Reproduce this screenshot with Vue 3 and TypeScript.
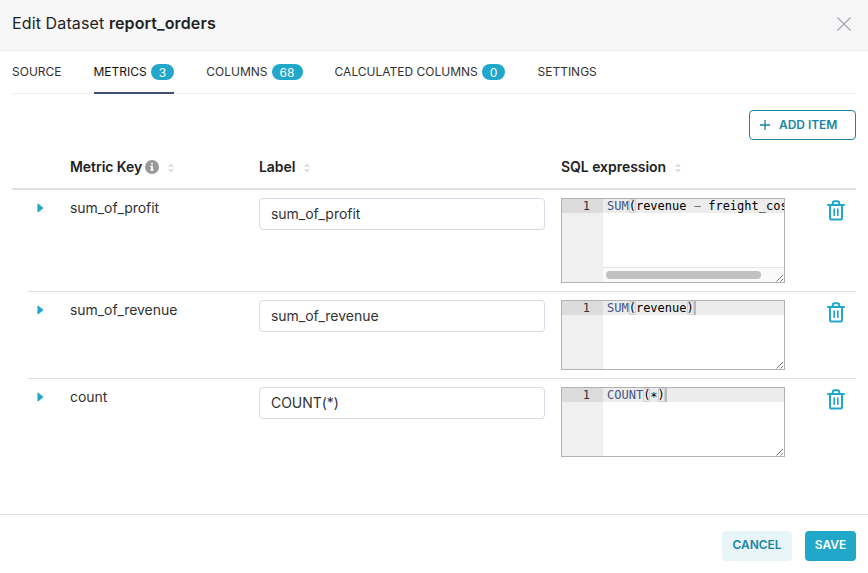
<script setup lang="ts">
import { ref } from 'vue'

interface Tab {
  label: string
  count?: number
}
interface Token {
  text: string
  kind: 'func' | 'plain' | 'op' | 'bracket' | 'star'
}
interface Metric {
  key: string
  label: string
  tokens: Token[]
  cursor: boolean
  scroll: boolean
}

const tabs: Tab[] = [
  { label: 'SOURCE' },
  { label: 'METRICS', count: 3 },
  { label: 'COLUMNS', count: 68 },
  { label: 'CALCULATED COLUMNS', count: 0 },
  { label: 'SETTINGS' },
]
const active = ref('METRICS')

const metrics = ref<Metric[]>([
  {
    key: 'sum_of_profit',
    label: 'sum_of_profit',
    tokens: [
      { text: 'SUM', kind: 'func' },
      { text: '(', kind: 'bracket' },
      { text: 'revenue ', kind: 'plain' },
      { text: '−', kind: 'op' },
      { text: ' freight_cos', kind: 'plain' },
    ],
    cursor: false,
    scroll: true,
  },
  {
    key: 'sum_of_revenue',
    label: 'sum_of_revenue',
    tokens: [
      { text: 'SUM', kind: 'func' },
      { text: '(', kind: 'bracket' },
      { text: 'revenue', kind: 'plain' },
      { text: ')', kind: 'bracket' },
    ],
    cursor: true,
    scroll: false,
  },
  {
    key: 'count',
    label: 'COUNT(*)',
    tokens: [
      { text: 'COUNT', kind: 'func' },
      { text: '(', kind: 'bracket' },
      { text: '*', kind: 'star' },
      { text: ')', kind: 'bracket' },
    ],
    cursor: true,
    scroll: false,
  },
])

const headings = [
  { title: 'Metric Key', info: true },
  { title: 'Label', info: false },
  { title: 'SQL expression', info: false },
]
</script>

<template>
  <div class="modal">
    <header class="modal-header">
      <div class="title">Edit Dataset <b>report_orders</b></div>
      <svg class="close" width="14" height="14" viewBox="0 0 14 14">
        <path d="M.5.5l13 13M13.5.5l-13 13" fill="none" stroke="#a3a3b8" stroke-width="1.2" />
      </svg>
    </header>

    <main class="body">
      <nav class="tabs">
        <div
          v-for="t in tabs"
          :key="t.label"
          class="tab"
          :class="{ active: t.label === active }"
          @click="active = t.label"
        >
          <span>{{ t.label }}</span>
          <span v-if="t.count !== undefined" class="badge">{{ t.count }}</span>
        </div>
      </nav>

      <div class="toolbar">
        <button class="add">
          <svg width="10" height="10" viewBox="0 0 10 10">
            <path d="M5 0v10M0 5h10" fill="none" stroke="#1a85a0" stroke-width="1.3" />
          </svg>
          <span>ADD ITEM</span>
        </button>
      </div>

      <section class="table">
        <div class="row head">
          <span></span>
          <div v-for="h in headings" :key="h.title" class="th">
            <span>{{ h.title }}</span>
            <svg v-if="h.info" class="info" width="14" height="14" viewBox="0 0 14 14">
              <circle cx="7" cy="7" r="7" fill="#999" />
              <path d="M6.1 2.9h1.8v1.7H6.1zM5.3 5.7h2.6v3.8h.8v1.2H5.3V9.5h.8V6.9h-.8z" fill="#fff" />
            </svg>
            <svg class="sort" width="6" height="10" viewBox="0 0 6 10">
              <path
                d="M3 .7L5.3 3.4H.7zM3 9.3L.7 6.6h4.6z"
                fill="#dedede"
                stroke="#dedede"
                stroke-width="1"
                stroke-linejoin="round"
              />
            </svg>
          </div>
        </div>

        <div v-for="m in metrics" :key="m.key" class="row item">
          <svg class="caret" width="7" height="10" viewBox="0 0 7 10">
            <path
              d="M1 1.2v7.6L5.6 5z"
              fill="#20a7c9"
              stroke="#20a7c9"
              stroke-width="1.1"
              stroke-linejoin="round"
            />
          </svg>
          <div class="key">{{ m.key }}</div>
          <input v-model="m.label" class="field" type="text" spellcheck="false" />
          <div class="editor" :class="{ tall: m.scroll }">
            <div class="gutter"><div class="line-no">1</div></div>
            <div class="content">
              <div class="line">
                <span v-for="(t, i) in m.tokens" :key="i" :class="t.kind">{{ t.text }}</span>
                <i v-if="m.cursor" class="cursor"></i>
              </div>
              <div v-if="m.scroll" class="scrollbar"><div class="thumb"></div></div>
            </div>
            <svg class="grip" width="8" height="8" viewBox="0 0 8 8">
              <path d="M.5 7.5l6.5-6.5M4.5 7.5L7 5" fill="none" stroke="#555" stroke-width=".8" />
            </svg>
          </div>
          <svg class="trash" width="18" height="21" viewBox="0 0 18 21">
            <g fill="none" stroke="#20a7c9" stroke-width="2" stroke-linecap="round" stroke-linejoin="round">
              <path d="M1 4.9h16M5.8 4.6V2.9Q5.8 1.2 7.5 1.2h3q1.7 0 1.7 1.7v1.7" />
              <path d="M3 5v12.7q0 1.9 1.9 1.9h8.2q1.9 0 1.9-1.9V5" />
              <path d="M7.2 9v6.2M10.8 9v6.2" stroke-width="1.7" />
            </g>
          </svg>
        </div>
      </section>
    </main>

    <footer class="modal-footer">
      <button class="btn cancel">CANCEL</button>
      <button class="btn save">SAVE</button>
    </footer>
  </div>
</template>

<style>
body {
  margin: 0;
  overflow: hidden;
}
</style>

<style scoped>
.modal {
  width: 868px;
  height: 573px;
  display: flex;
  flex-direction: column;
  background: #fff;
  color: #323232;
  font-family: Inter, 'Liberation Sans', sans-serif;
  font-size: 14px;
}
.modal *,
.modal {
  box-sizing: border-box;
}
.modal-header {
  height: 51px;
  padding: 0 17px 3px 12px;
  display: flex;
  align-items: center;
  justify-content: space-between;
  background: #f7f7f7;
  border-bottom: 1px solid #ececec;
}
.title {
  padding-bottom: 2px;
  font-size: 16px;
  line-height: 22px;
  letter-spacing: 0.12px;
  color: #222;
}
.title b {
  font-weight: 600;
}
.body {
  flex: 1;
  padding: 0 12px;
}
.tabs {
  display: flex;
  gap: 32px;
  height: 43px;
  border-bottom: 1px solid #f0f0f0;
}
.tab {
  height: 43px;
  display: flex;
  align-items: center;
  gap: 4px;
  font-size: 12px;
  color: #323232;
  white-space: nowrap;
  border-bottom: 2px solid transparent;
}
.tab.active {
  color: #111;
  border-color: #444e7c;
}
.badge {
  height: 16px;
  padding: 0 8px;
  border-radius: 8px;
  background: #20a7c9;
  color: #fff;
  line-height: 17px;
  letter-spacing: 0.1px;
}
.toolbar {
  display: flex;
  justify-content: flex-end;
  padding-top: 16px;
}
button {
  margin: 0;
  font-family: inherit;
  font-size: 12px;
  font-weight: 600;
  letter-spacing: -0.05px;
  border: 0;
  border-radius: 4px;
}
.add {
  width: 107px;
  height: 30px;
  padding: 0 0 2px 10px;
  display: flex;
  align-items: center;
  gap: 9px;
  background: #fff;
  border: 1px solid #1a85a0;
  color: #1a85a0;
}
.add svg {
  margin-top: 2px;
}
.row {
  display: grid;
  grid-template-columns: 42px 189px 302px 266px 29px;
}
.head {
  height: 50px;
  padding: 5px 0 0 16px;
  align-items: center;
  border-bottom: 2px solid #e0e0e0;
  font-weight: 600;
  letter-spacing: -0.05px;
  color: #222;
}
.th {
  display: flex;
  align-items: center;
}
.info {
  margin-left: 3px;
}
.sort {
  margin: 2px 0 0 9px;
}
.item {
  margin-left: 16px;
  padding: 8px 0;
  align-items: start;
  border-bottom: 1px solid #e0e0e0;
}
.item:last-child {
  border-bottom: 0;
}
.caret {
  margin: 5px 0 0 9px;
}
.key {
  line-height: 20px;
  letter-spacing: -0.05px;
}
.field {
  width: 286px;
  height: 32px;
  padding: 0 11px 2px;
  border: 1px solid #d9d9e6;
  border-radius: 4px;
  background: #fff;
  color: #323232;
  font: inherit;
  letter-spacing: -0.03px;
  outline: none;
}
.editor {
  position: relative;
  display: flex;
  width: 224px;
  height: 70px;
  border: 1px solid #b2b2b2;
  overflow: hidden;
  font: 12px/14px 'DejaVu Sans Mono', monospace;
  color: #000;
}
.editor.tall {
  height: 85px;
}
.gutter {
  width: 41px;
  flex: none;
  background: #f0f0f0;
}
.line-no {
  height: 14px;
  padding-right: 13px;
  text-align: right;
  color: #333;
  background: #dcdcdc;
}
.content {
  flex: 1;
  min-width: 0;
  display: flex;
  flex-direction: column;
  justify-content: space-between;
}
.line {
  display: flex;
  height: 14px;
  padding-left: 4px;
  background: #ececec;
  white-space: pre;
}
.line span {
  flex: none;
}
.func {
  color: #445588;
}
.op {
  color: #687687;
}
.star {
  padding-top: 2px;
}
.bracket {
  border-radius: 2px;
  box-shadow: inset 0 0 0 1px #cfcfcf;
}
.cursor {
  width: 2px;
  height: 14px;
  background: #b8b8b8;
}
.scrollbar {
  height: 15px;
  padding: 3px;
  background: #fafafa;
  border-top: 1px solid #e6e6e6;
}
.thumb {
  width: 155px;
  height: 8px;
  border-radius: 4px;
  background: #c1c1c1;
}
.grip {
  position: absolute;
  right: 0;
  bottom: 0;
}
.trash {
  margin-top: 2px;
}
.modal-footer {
  height: 59px;
  padding: 16px 12px 0;
  display: flex;
  justify-content: flex-end;
  gap: 13px;
  border-top: 1px solid #e0e0e0;
}
.btn {
  height: 30px;
  padding: 0 0 3px;
}
.cancel {
  width: 70px;
  background: #e9f6f9;
  color: #1a85a0;
}
.save {
  width: 51px;
  background: #20a7c9;
  color: #fff;
}
</style>
